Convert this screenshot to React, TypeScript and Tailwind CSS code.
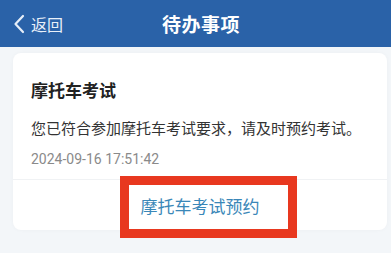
import React from "react";

export default function App() {
  const font = { fontFamily: '"Noto Sans CJK SC", "Noto Sans", sans-serif' };
  return (
    <div className="w-[391px] h-[253px] overflow-hidden bg-[#f3f6f9] relative" style={font}>
      <div className="h-[47px] bg-[#2a62a8] relative flex items-center">
        <div className="flex items-center pl-[13px] text-white">
          <svg width="12" height="20" viewBox="0 0 12 20" className="mr-[6px]">
            <path d="M10 2 L2.5 10 L10 18" fill="none" stroke="#e6eef8" strokeWidth="2.2" strokeLinecap="round" strokeLinejoin="round" />
          </svg>
          <span className="text-[16px] leading-none text-[#e9f0f9]">返回</span>
        </div>
        <div className="absolute left-[162px] top-0 h-[47px] flex items-center text-[19px] font-bold text-white leading-none tracking-[0.5px]">
          待办事项
        </div>
      </div>
      <div className="ml-[13px] mr-[4px] mt-[6px] bg-white rounded-[8px] shadow-[0_0_4px_rgba(0,0,0,0.03)]">
        <div className="pl-[18px] pt-[25px] pb-[10px]">
          <div className="text-[17px] font-bold text-[#222] leading-[24px]">摩托车考试</div>
          <div className="mt-[15px] text-[15px] text-[#333] leading-[22px]">您已符合参加摩托车考试要求，请及时预约考试。</div>
          <div className="mt-[10px] text-[14px] text-[#8a8a8a] leading-[20px]" style={{ fontFamily: '"Roboto", "Noto Sans", sans-serif' }}>2024-09-16 17:51:42</div>
        </div>
        <div className="border-t border-[#f0f2f4] h-[51px] flex items-center justify-center">
          <span className="text-[17px] text-[#3a87b8] leading-none">摩托车考试预约</span>
        </div>
      </div>
      <div className="absolute left-[120px] top-[176px] w-[177px] h-[62px] border-[9px] border-[#e8381f]" />
    </div>
  );
}
